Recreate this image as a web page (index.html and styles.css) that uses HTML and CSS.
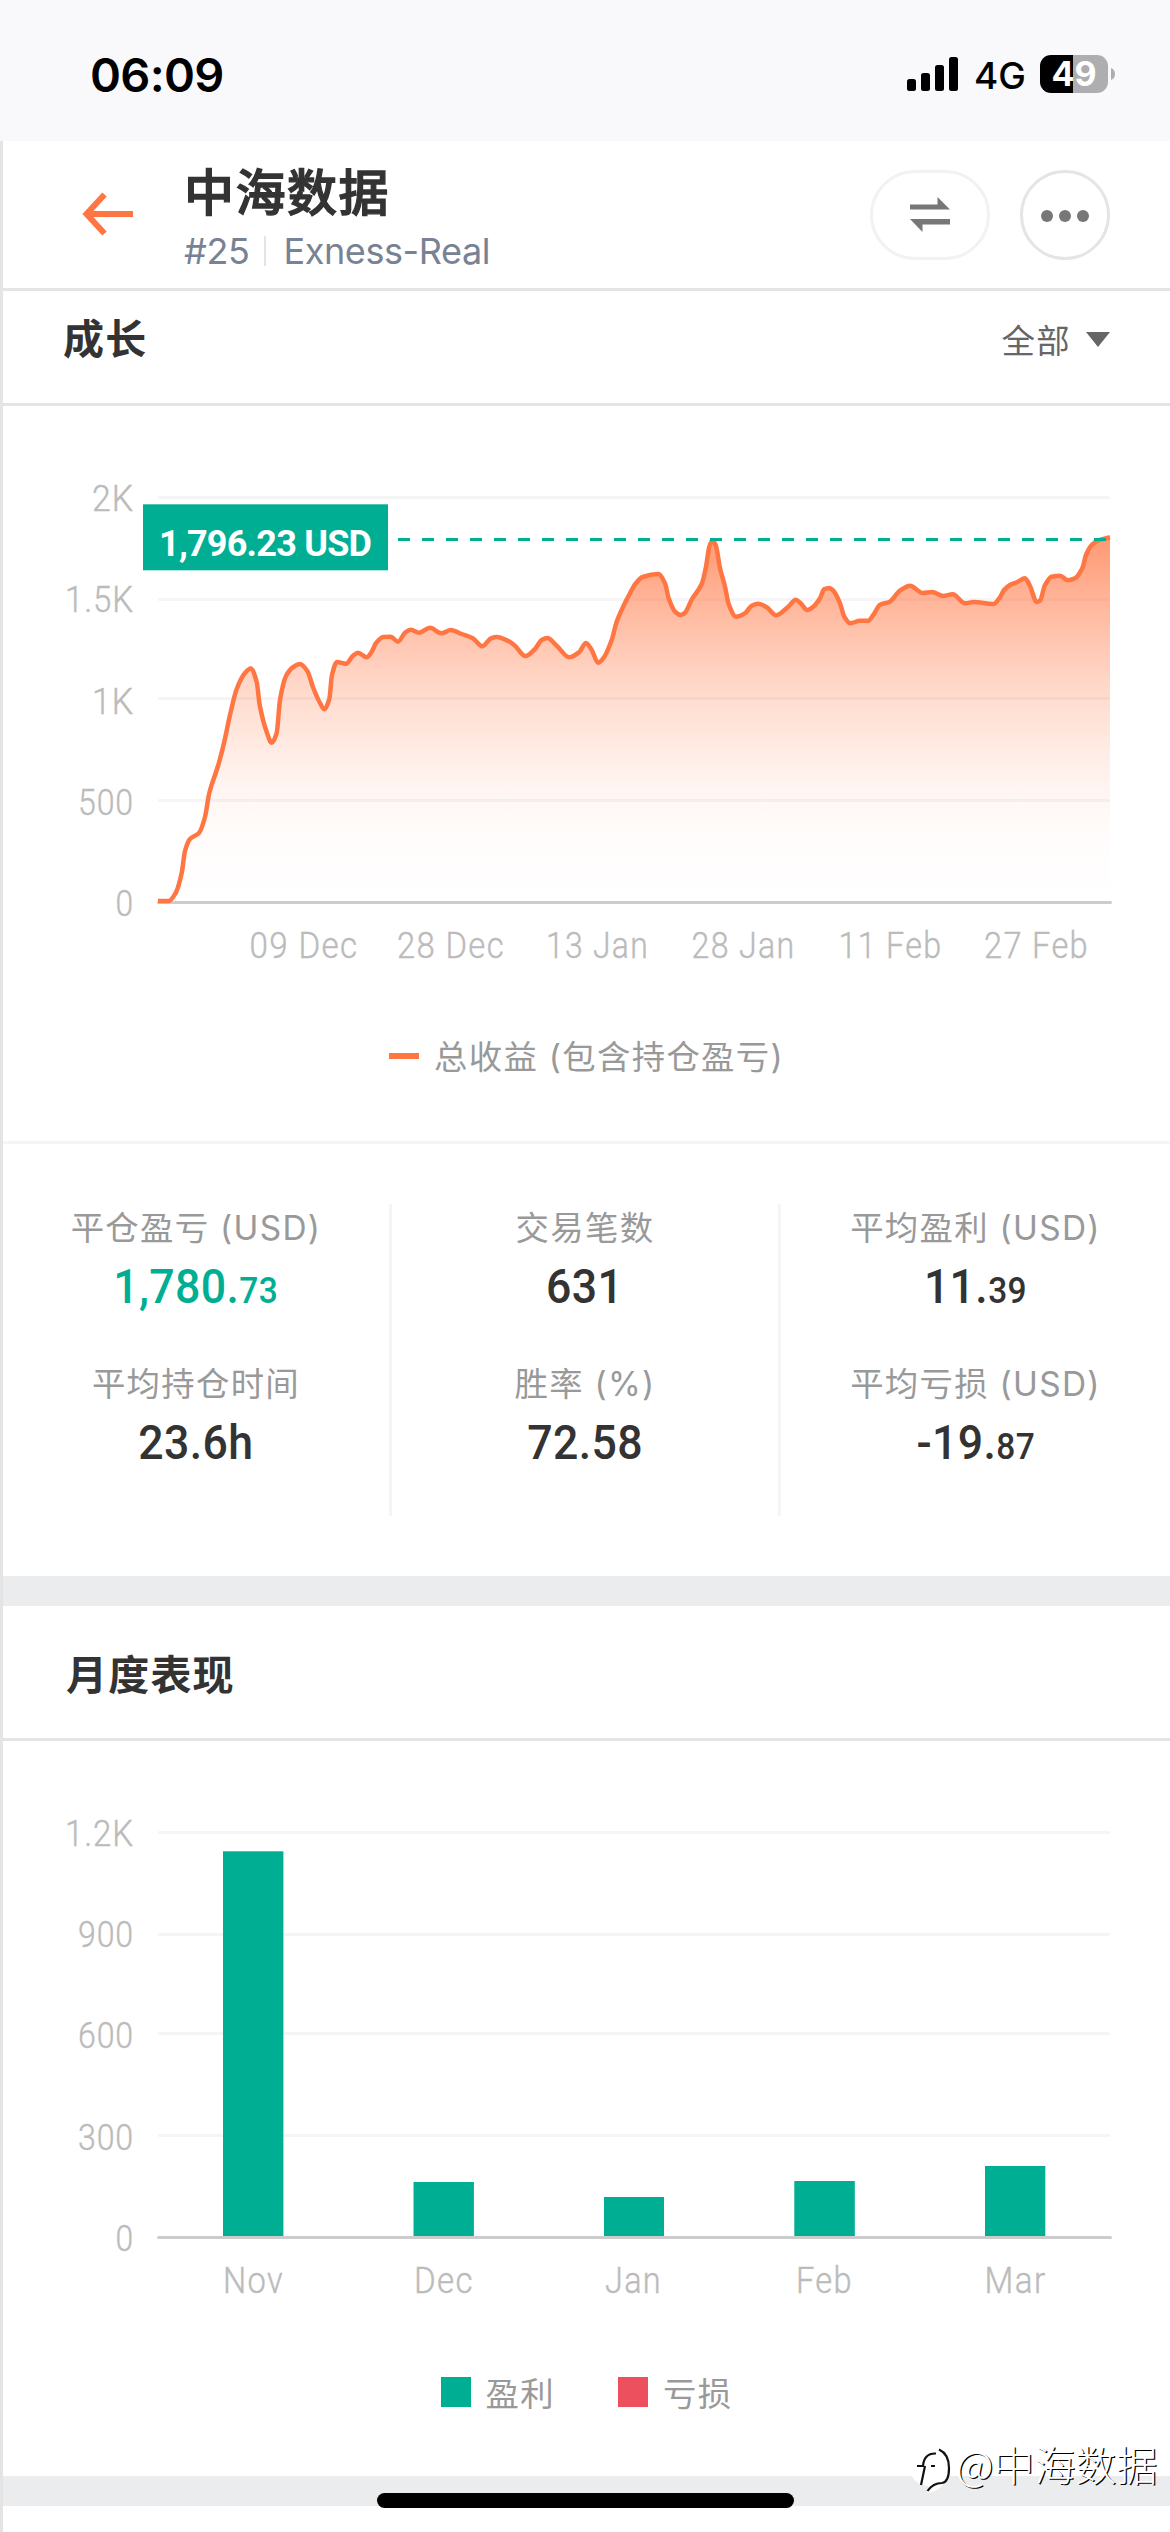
FILE: index.html
```html
<!DOCTYPE html>
<html lang="zh-CN">
<head>
<meta charset="utf-8">
<title>中海数据</title>
<link rel="stylesheet" href="styles.css">
</head>
<body>
<div class="phone">
  <div class="status">
    <span class="time">06:09</span>
    <div class="status-right">
      <svg class="signal" width="51" height="34" viewBox="0 0 51 34"><rect y="22" width="9" height="12" rx="2.5"/><rect x="14" y="16" width="9" height="18" rx="2.5"/><rect x="28" y="8" width="9" height="26" rx="2.5"/><rect x="42" width="9" height="34" rx="2.5"/></svg>
      <span class="net">4G</span>
      <div class="battery"><span class="battery-text">49</span></div>
      <svg class="nub" width="4" height="12" viewBox="0 0 4 12"><path d="M0 0Q4 1.500 4 6T0 12Z" fill="#aeaeb2"/></svg>
    </div>
  </div>

  <main class="page">
    <header class="topbar">
      <svg class="back" width="52" height="44" viewBox="0 0 52 44" fill="none" stroke="#ff7643" stroke-width="6"><path d="M22.500 2.500 4.500 22l18 19.500M5 22h46"/></svg>
      <div class="heading">
        <h1 class="name">中海数据</h1>
        <div class="meta"><span>#25</span><i class="sep"></i><span>Exness-Real</span></div>
      </div>
      <button class="pill"><svg width="40" height="35" viewBox="0 0 40 35" fill="#777"><path d="M0 7.500h27.500V0L40 12.500H0zM40 27.500H12.500V35L0 22h40z"/></svg></button>
      <button class="more"><svg width="48" height="12" viewBox="0 0 48 12" fill="#777"><circle cx="6" cy="6" r="6"/><circle cx="24" cy="6" r="6"/><circle cx="42" cy="6" r="6"/></svg></button>
    </header>

    <section class="growth">
      <div class="section-head">
        <h2 class="title">成长</h2>
        <div class="range">全部<svg width="24" height="15" viewBox="0 0 24 15"><path d="M0 0h24L12 15z" fill="#666"/></svg></div>
      </div>
      <svg class="chart" width="1167" height="594" viewBox="3 406 1167 594">
        <defs>
          <linearGradient id="fade" gradientUnits="userSpaceOnUse" x1="0" y1="534" x2="0" y2="903">
            <stop offset="0" stop-color="#ff7643" stop-opacity=".76"/>
            <stop offset=".18" stop-color="#ff7643" stop-opacity=".54"/>
            <stop offset=".32" stop-color="#ff7643" stop-opacity=".38"/>
            <stop offset=".45" stop-color="#ff7643" stop-opacity=".25"/>
            <stop offset=".6" stop-color="#ff7643" stop-opacity=".13"/>
            <stop offset=".72" stop-color="#ff7643" stop-opacity=".055"/>
            <stop offset=".85" stop-color="#ff7643" stop-opacity=".015"/>
            <stop offset="1" stop-color="#ff7643" stop-opacity="0"/>
          </linearGradient>
        </defs>
        <g class="grid"><path d="M158 497.500H1110M158 599.500H1110M158 698.500H1110M158 800.500H1110"/></g>
        <path class="axis" d="M158.500 902.500H1110.500"/>
        <path id="area" fill="url(#fade)"/>
        <path id="line" class="line"/>
        <path class="peak" d="M398 539.500H1110"/>
        <rect x="143" y="504.300" width="245" height="66" fill="#00af93"/>
        <text class="badge" x="159" y="556" textLength="213">1,796.23 USD</text>
        <g class="ylab">
          <text x="134" y="511" textLength="42" lengthAdjust="spacingAndGlyphs">2K</text>
          <text x="134" y="612" textLength="69" lengthAdjust="spacingAndGlyphs">1.5K</text>
          <text x="134" y="713.500" textLength="42" lengthAdjust="spacingAndGlyphs">1K</text>
          <text x="134" y="814.500" textLength="56" lengthAdjust="spacingAndGlyphs">500</text>
          <text x="134" y="916" textLength="18.500" lengthAdjust="spacingAndGlyphs">0</text>
        </g>
        <g class="xlab">
          <text x="304" y="958" textLength="109" lengthAdjust="spacingAndGlyphs">09 Dec</text>
          <text x="451" y="958" textLength="108" lengthAdjust="spacingAndGlyphs">28 Dec</text>
          <text x="597.500" y="958" textLength="103" lengthAdjust="spacingAndGlyphs">13 Jan</text>
          <text x="743.500" y="958" textLength="104" lengthAdjust="spacingAndGlyphs">28 Jan</text>
          <text x="890.500" y="958" textLength="104" lengthAdjust="spacingAndGlyphs">11 Feb</text>
          <text x="1036.500" y="958" textLength="105" lengthAdjust="spacingAndGlyphs">27 Feb</text>
        </g>
      </svg>
      <div class="legend line-legend"><i class="dash"></i><span>总收益 (包含持仓盈亏)</span></div>
      <div class="stats">
        <div class="col">
          <span class="label">平仓盈亏 (USD)</span><span class="value up">1,780.<small>73</small></span>
          <span class="label">平均持仓时间</span><span class="value">23.6h</span>
        </div>
        <div class="col">
          <span class="label">交易笔数</span><span class="value">631</span>
          <span class="label">胜率 (%)</span><span class="value">72.58</span>
        </div>
        <div class="col">
          <span class="label">平均盈利 (USD)</span><span class="value">11.<small>39</small></span>
          <span class="label">平均亏损 (USD)</span><span class="value">-19.<small>87</small></span>
        </div>
      </div>
    </section>

    <section class="monthly">
      <div class="section-head tall"><h2 class="title">月度表现</h2></div>
      <svg class="chart" width="1167" height="594" viewBox="3 1741 1167 594">
        <g class="grid"><path d="M158 1832.500H1110M158 1934.500H1110M158 2033.500H1110M158 2135.500H1110"/></g>
        <g fill="#00af93">
          <rect x="223" y="1851.300" width="60.400" height="385"/><rect x="413.500" y="2182" width="60.400" height="55"/><rect x="604" y="2197" width="60" height="40"/><rect x="794.300" y="2181" width="60.500" height="56"/><rect x="985" y="2166" width="60.300" height="71"/>
        </g>
        <path class="axis" d="M158.500 2237.500H1110.500"/>
        <g class="ylab">
          <text x="134" y="1846" textLength="69" lengthAdjust="spacingAndGlyphs">1.2K</text>
          <text x="134" y="1947" textLength="56" lengthAdjust="spacingAndGlyphs">900</text>
          <text x="134" y="2048" textLength="56" lengthAdjust="spacingAndGlyphs">600</text>
          <text x="134" y="2149.500" textLength="56" lengthAdjust="spacingAndGlyphs">300</text>
          <text x="134" y="2251" textLength="18.500" lengthAdjust="spacingAndGlyphs">0</text>
        </g>
        <g class="xlab">
          <text x="253.500" y="2293" textLength="61" lengthAdjust="spacingAndGlyphs">Nov</text>
          <text x="444" y="2293" textLength="60" lengthAdjust="spacingAndGlyphs">Dec</text>
          <text x="633.500" y="2293" textLength="57" lengthAdjust="spacingAndGlyphs">Jan</text>
          <text x="824.500" y="2293" textLength="57" lengthAdjust="spacingAndGlyphs">Feb</text>
          <text x="1015.500" y="2293" textLength="62" lengthAdjust="spacingAndGlyphs">Mar</text>
        </g>
      </svg>
      <div class="legend bar-legend">
        <div class="key"><i class="box profit"></i><span>盈利</span></div>
        <div class="key"><i class="box loss"></i><span>亏损</span></div>
      </div>
    </section>
  </main>

  <div class="home"></div>
  <div class="mark">
    <svg width="48" height="52" viewBox="0 0 48 52">
      <circle cx="21" cy="20" r="20" fill="#fff"/>
      <path d="M13 36 21 38 19 47Q34 45 38 32L38 10" fill="#fff"/>
      <g fill="none" stroke="#111" stroke-width="2.200"><path d="M31 3.500Q41 8 41 22T34 37Q25 37 19.500 45M9 20h6Q16 7 28 7.500"/><path d="M17 20 13 39M23 20h4"/></g>
    </svg>
    <span class="mark-text">@中海数据</span>
  </div>
</div>
<script src="app.js"></script>
</body>
</html>
```
FILE: styles.css
```css
* { box-sizing: border-box; margin: 0; padding: 0; }
body {
  width: 1170px;
  background: #fff;
  font-family: Inter, "Noto Sans CJK SC", sans-serif;
  color: #333;
}
.phone { position: relative; height: 2532px; overflow: hidden; }

.status {
  height: 141px;
  padding: 0 55px 0 90px;
  background: #f9f9fb;
  display: flex;
  justify-content: space-between;
  color: #000;
}
.time { font-size: 47px; font-weight: 600; line-height: 149px; letter-spacing: -.7px; }
.status-right { display: flex; align-items: center; height: 148px; }
.net { font-size: 37px; font-weight: 500; margin-left: 16px; width: 51px; line-height: 148px; padding-top: 3px; }
.battery {
  width: 68px; height: 38px; margin-left: 15px;
  border-radius: 11px;
  background: linear-gradient(90deg, #000 33px, #aeaeb2 33px);
  text-align: center;
}
.battery-text { display: block; color: #fff; font-size: 34px; font-weight: 700; line-height: 38px; }
.nub { margin-left: 3px; }

.page { border-left: 3px solid #e4e4e4; height: 2391px; }
.topbar {
  height: 150px;
  border-bottom: 3px solid #e4e4e4;
  padding: 0 60px 0 79px;
  display: flex;
  align-items: center;
}
.back { flex: none; margin-top: -2px; }
.heading { flex: 1; height: 147px; margin-left: 50px; }
.name { font-size: 50px; font-weight: 500; line-height: 60px; letter-spacing: 1.5px; margin-top: 22px; white-space: nowrap; -webkit-text-stroke: 1.3px #333; }
.meta { display: flex; align-items: center; height: 44px; margin-top: 6px; color: #778394; font-size: 36px; line-height: 44px; letter-spacing: -.4px; }
.sep { width: 2px; height: 30px; background: #e4e4e4; margin: 0 17px 0 15px; }
.pill, .more { height: 90px; border: 3px solid #f2f2f2; border-radius: 45px; background: #fff; display: flex; align-items: center; justify-content: center; }
.pill { width: 120px; margin-right: 30px; }
.more { width: 90px; border-color: #e5e5e5; }
.more svg { margin-top: 3px; }

.section-head {
  height: 115px;
  padding: 0 60px 18px;
  border-bottom: 3px solid #e4e4e4;
  display: flex;
  justify-content: space-between;
  align-items: center;
}
.section-head.tall { height: 135px; padding: 3px 60px 0 63px; }
.title { font-size: 41px; font-weight: 700; letter-spacing: 1.2px; margin-top: -4px; }
.range { display: flex; align-items: center; color: #666; font-size: 33.4px; letter-spacing: 1.3px; }
.range svg { margin: 2px 0 0 15px; }

.chart { display: block; font-family: Roboto, sans-serif; }
.grid { stroke: #f5f5f6; stroke-width: 3; }
.axis { stroke: #ccc; stroke-width: 3; stroke-linecap: round; }
.line { fill: none; stroke: #ff7643; stroke-width: 4.5; stroke-linejoin: round; }
.peak { stroke: #00af93; stroke-width: 3; stroke-dasharray: 12 12; }
.badge { fill: #fff; font-size: 36px; font-weight: 700; }
.ylab, .xlab { fill: #bbb; font-size: 36.5px; font-weight: 300; stroke: #bbb; stroke-width: .4px; }
.ylab { text-anchor: end; letter-spacing: 1px; }
.xlab { text-anchor: middle; letter-spacing: 1.5px; }

.legend { display: flex; justify-content: center; align-items: center; color: #999; font-size: 33.4px; letter-spacing: 1.3px; }
.legend span { margin-top: -2px; }
.line-legend { height: 144px; padding-bottom: 30px; border-bottom: 3px solid #f5f5f5; }
.dash { width: 30px; height: 6px; margin-right: 15px; background: #ff7643; }

.stats { height: 432px; padding-top: 60px; display: grid; grid-template-columns: repeat(3, 1fr); }
.col { height: 312px; display: flex; flex-direction: column; align-items: center; border-right: 3px solid #f5f5f5; }
.col:last-child { border-right: 0; }
.label { height: 48px; line-height: 48px; color: #999; font-size: 33.4px; letter-spacing: 1.3px; }
.value { height: 108px; line-height: 70px; font-family: Roboto, sans-serif; font-size: 48px; font-weight: 500; letter-spacing: .4px; transform: scaleX(.93); }
.value small { font-size: 36px; }
.up { color: #00af93; }

.monthly { height: 930px; border-top: 30px solid #ebecee; border-bottom: 30px solid #ebecee; }
.bar-legend { height: 114px; gap: 63px; }
.key { display: flex; align-items: center; }
.box { width: 30px; height: 30px; margin-right: 15px; }
.profit { background: #00af93; }
.loss { background: #ec4f5e; }

.home { position: absolute; left: 377px; top: 2493px; width: 417px; height: 15px; border-radius: 8px; background: #000; }
.mark { position: absolute; left: 908px; top: 2436px; display: flex; align-items: flex-start; white-space: nowrap; }
.mark svg { margin-top: 10px; }
.mark-text {
  color: #fff;
  font-family: "Noto Sans CJK SC", sans-serif;
  font-size: 41px;
  font-weight: 300;
  line-height: 54px;
  text-shadow: 1.2px 1.2px 0 #000;
}
```
FILE: app.js
```js
// Cumulative profit samples as [x, y] positions on the plot.
const samples = [
  [158,901],[168.7,901],[175.7,893],[181.7,873],[185,851],[190,839],[199,833],[205,817],[209.3,793],[218.3,765],[224,743],[230,715],[236.7,689],[245,673],[250.7,668.5],[256.7,682],[259.7,705],[266.7,732],[271.7,742.7],[276.7,733],[280,700],[286,676],[293.3,667],[300,664],[307.3,671],[313.3,688],[320,703],[324.3,709.3],[329.3,699],[332,675],[337,662],[346,663.7],[353,655.7],[358,652.7],[366.7,657.3],[371.7,651.7],[376,643],[383.3,637],[390.7,636.7],[398,641.7],[405,632.7],[410.7,629.7],
  [419.3,632.7],[430,627.7],[441.3,633.3],[450.7,630],[461.7,634],[472.7,638.3],[482.3,646.3],[491,638.3],[496.7,637],[508.3,641],[515,645.7],[525.3,656],[535,649],[541.7,640],[547.3,638],[556.7,645.7],[569.3,657.3],[579.3,652],[586,643],[591.7,650],[598,662.7],[603.3,658.3],[611.7,640],[616.7,621.7],[624,605],[630,593.3],[635.3,584],[642.7,577],[658.3,574],[665,583.3],[668.7,598.3],[675.3,612],[680.7,615],[685.3,612.3],[692,599],[701.7,584],[706,566.7],[709.3,546.7],[712.7,540],[716,546],[720,568.3],[725,586.7],[728.7,604],[736,616.7],[745.3,613],[751.7,605.7],[758.3,603.7],[766.7,607.3],[776,615.3],
  [788.3,606.7],[795.7,599.7],[800.7,603.3],[807.3,610],[813.3,606.7],[820,598.3],[824,589.3],[829,588],[833.3,590.7],[840,603.3],[844.3,616.7],[850.3,623.3],[860,620.7],[868,620.7],[873.3,615],[880,604.7],[889.3,602],[900,590.7],[910,585.7],[922.7,593],[932,592],[943.3,596],[952.7,594.3],[965,603.3],[974,602],[993.3,604],[1000,597.3],[1004,590],[1010,585],[1017.3,582],[1025,578.3],[1030,586],[1036.7,602],[1040,600.7],[1045,585],[1051.7,576.7],[1060,575.7],[1067.7,580.3],[1075,578.3],[1082.3,568.3],[1086,555],[1091.7,545],[1098.3,540.3],[1110,537.3]
];

// Monotone cubic interpolation, so the curve never overshoots a sample.
function smooth(p) {
  const n = p.length;
  const slope = [];
  for (let i = 0; i < n - 1; i++) slope.push((p[i + 1][1] - p[i][1]) / (p[i + 1][0] - p[i][0]));
  const t = [slope[0]];
  for (let i = 1; i < n - 1; i++) {
    const a = slope[i - 1], b = slope[i];
    t.push(a * b <= 0 ? 0 : 2 * a * b / (a + b));
  }
  t.push(slope[n - 2]);
  let d = `M${p[0][0]} ${p[0][1]}`;
  for (let i = 0; i < n - 1; i++) {
    const h = (p[i + 1][0] - p[i][0]) / 3;
    d += `C${p[i][0] + h} ${p[i][1] + h * t[i]} ${p[i + 1][0] - h} ${p[i + 1][1] - h * t[i + 1]} ${p[i + 1][0]} ${p[i + 1][1]}`;
  }
  return d;
}

const curve = smooth(samples);
document.getElementById("line").setAttribute("d", curve);
document.getElementById("area").setAttribute("d", curve + "V902H158Z");
```
